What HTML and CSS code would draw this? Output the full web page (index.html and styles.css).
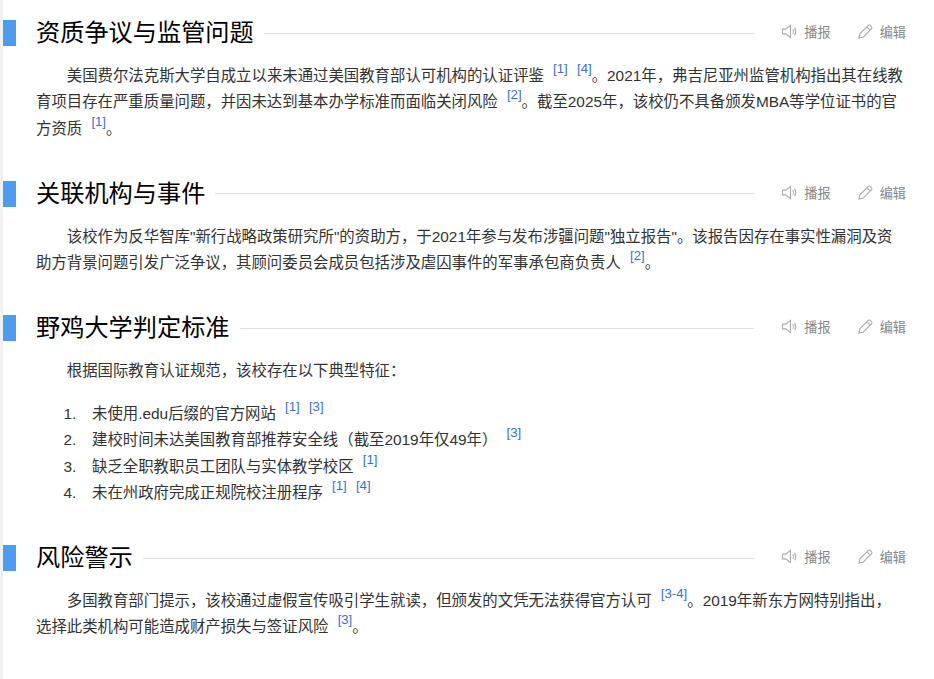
FILE: index.html
```html
<!DOCTYPE html>
<html lang="zh-CN">
<head>
<meta charset="utf-8">
<title>词条</title>
<link rel="stylesheet" href="styles.css">
</head>
<body>
<main class="page">
  <section class="section">
    <header class="head">
      <span class="bar"></span>
      <h2 class="title">资质争议与监管问题</h2>
      <span class="rule"></span>
      <span class="action"><svg class="icon" viewBox="0 0 18 18"><path d="M1.500 6.500H5L10 2.500V15.500L5 11.500H1.500Z"/><path d="M12.500 6.500Q14 9 12.500 11.500M14.500 5Q16.500 9 14.500 13"/></svg>播报</span>
      <span class="action action-edit"><svg class="icon" viewBox="0 0 18 18"><path d="M2 16L3 11.500L12 2.500Q13 1.500 14.500 3L15 3.500Q16.500 5 15.500 6L6.500 15Z"/><path d="M10.500 4L14 7.500"/></svg>编辑</span>
    </header>
    <p class="para">美国费尔法克斯大学自成立以来未通过美国教育部认可机构的认证评鉴<sup class="ref">[1]</sup><sup class="ref">[4]</sup>。2021年，弗吉尼亚州监管机构指出其在线教育项目存在严重质量问题，并因未达到基本办学标准而面临关闭风险<sup class="ref">[2]</sup>。截至2025年，该校仍不具备颁发MBA等学位证书的官方资质<sup class="ref">[1]</sup>。</p>
  </section>
  <section class="section">
    <header class="head">
      <span class="bar"></span>
      <h2 class="title">关联机构与事件</h2>
      <span class="rule"></span>
      <span class="action"><svg class="icon" viewBox="0 0 18 18"><path d="M1.500 6.500H5L10 2.500V15.500L5 11.500H1.500Z"/><path d="M12.500 6.500Q14 9 12.500 11.500M14.500 5Q16.500 9 14.500 13"/></svg>播报</span>
      <span class="action action-edit"><svg class="icon" viewBox="0 0 18 18"><path d="M2 16L3 11.500L12 2.500Q13 1.500 14.500 3L15 3.500Q16.500 5 15.500 6L6.500 15Z"/><path d="M10.500 4L14 7.500"/></svg>编辑</span>
    </header>
    <p class="para">该校作为反华智库"新行战略政策研究所"的资助方，于2021年参与发布涉疆问题"独立报告"。该报告因存在事实性漏洞及资助方背景问题引发广泛争议，其顾问委员会成员包括涉及虐囚事件的军事承包商负责人<sup class="ref">[2]</sup>。</p>
  </section>
  <section class="section">
    <header class="head">
      <span class="bar"></span>
      <h2 class="title">野鸡大学判定标准</h2>
      <span class="rule"></span>
      <span class="action"><svg class="icon" viewBox="0 0 18 18"><path d="M1.500 6.500H5L10 2.500V15.500L5 11.500H1.500Z"/><path d="M12.500 6.500Q14 9 12.500 11.500M14.500 5Q16.500 9 14.500 13"/></svg>播报</span>
      <span class="action action-edit"><svg class="icon" viewBox="0 0 18 18"><path d="M2 16L3 11.500L12 2.500Q13 1.500 14.500 3L15 3.500Q16.500 5 15.500 6L6.500 15Z"/><path d="M10.500 4L14 7.500"/></svg>编辑</span>
    </header>
    <p class="para">根据国际教育认证规范，该校存在以下典型特征：</p>
    <ol class="list">
      <li class="item">未使用.edu后缀的官方网站<sup class="ref">[1]</sup><sup class="ref">[3]</sup></li>
      <li class="item">建校时间未达美国教育部推荐安全线（截至2019年仅49年）<sup class="ref">[3]</sup></li>
      <li class="item">缺乏全职教职员工团队与实体教学校区<sup class="ref">[1]</sup></li>
      <li class="item">未在州政府完成正规院校注册程序<sup class="ref">[1]</sup><sup class="ref">[4]</sup></li>
    </ol>
  </section>
  <section class="section">
    <header class="head">
      <span class="bar"></span>
      <h2 class="title">风险警示</h2>
      <span class="rule"></span>
      <span class="action"><svg class="icon" viewBox="0 0 18 18"><path d="M1.500 6.500H5L10 2.500V15.500L5 11.500H1.500Z"/><path d="M12.500 6.500Q14 9 12.500 11.500M14.500 5Q16.500 9 14.500 13"/></svg>播报</span>
      <span class="action action-edit"><svg class="icon" viewBox="0 0 18 18"><path d="M2 16L3 11.500L12 2.500Q13 1.500 14.500 3L15 3.500Q16.500 5 15.500 6L6.500 15Z"/><path d="M10.500 4L14 7.500"/></svg>编辑</span>
    </header>
    <p class="para">多国教育部门提示，该校通过虚假宣传吸引学生就读，但颁发的文凭无法获得官方认可<sup class="ref">[3-4]</sup>。2019年新东方网特别指出，选择此类机构可能造成财产损失与签证风险<sup class="ref">[3]</sup>。</p>
  </section>
</main>
</body>
</html>
```
FILE: styles.css
```css
html, body {
  margin: 0;
  padding: 0;
  height: 100%;
  overflow: hidden;
  background: #fff;
}
body {
  border-left: 3px solid #f1f1f1;
  box-sizing: border-box;
  font-family: "Liberation Sans", "Noto Sans CJK SC", sans-serif;
  color: #333;
}
.page {
  padding: 20px 28px 0 0;
}
.section {
  margin-bottom: 38.5px;
}
.section:last-child {
  margin-bottom: 0;
}
.head {
  display: flex;
  align-items: center;
  height: 26.4px;
}
.bar {
  width: 13px;
  height: 26.4px;
  background: #4f9cee;
  flex: none;
}
.title {
  margin: 0 10px 0 20px;
  font-size: 24.2px;
  font-weight: 400;
  color: #000;
  line-height: 26.4px;
  white-space: nowrap;
}
.rule {
  flex: 1;
  height: 1px;
  background: #e0e0e0;
  margin-right: 27px;
}
.action {
  display: flex;
  align-items: center;
  gap: 6px;
  font-size: 13.2px;
  color: #888;
  white-space: nowrap;
  margin-bottom: 3px;
}
.action-edit {
  margin-left: 26px;
}
.icon {
  width: 17px;
  height: 17px;
  fill: none;
  stroke: #aaa;
  stroke-width: 1.1;
}
.para {
  margin: 16.6px 0 0 33px;
  font-size: 15.4px;
  line-height: 26.4px;
  text-indent: 2em;
}
.list {
  margin: 16.5px 0 0 33px;
  padding: 0;
  list-style: none;
  counter-reset: n;
}
.item {
  counter-increment: n;
  font-size: 15.4px;
  line-height: 26.4px;
}
.item::before {
  content: counter(n) ".";
  display: inline-block;
  width: 56px;
  padding-left: 27.5px;
  box-sizing: border-box;
}
.ref {
  font-size: 13.2px;
  line-height: 0;
  color: #3a6fd8;
  margin-left: 9.2px;
  vertical-align: 8px;
}
```
